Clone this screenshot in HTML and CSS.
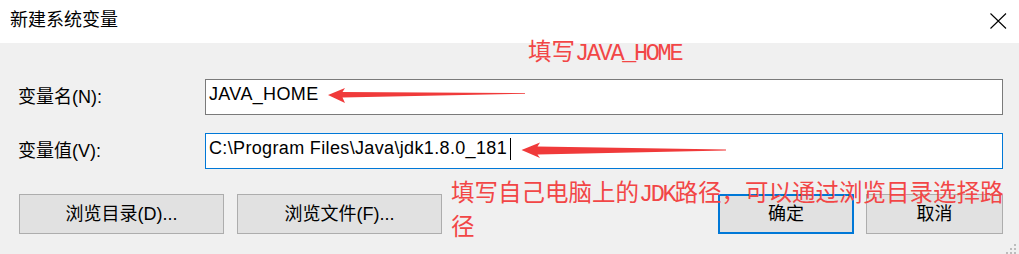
FILE: index.html
```html
<!DOCTYPE html>
<html lang="zh-CN">
<head>
<meta charset="utf-8">
<title>新建系统变量</title>
<link rel="stylesheet" href="styles.css">
</head>
<body>
<div class="window">
  <div class="titlebar">
    <span class="title">新建系统变量</span>
    <span class="close">
      <svg width="17" height="16" viewBox="0 0 17 16"><path d="M0.5 0.5 L16 15.5 M16 0.5 L0.5 15.5" stroke="#000" stroke-width="1.1" fill="none"/></svg>
    </span>
  </div>
  <div class="content">
    <div class="row">
      <span class="label">变量名(N):</span>
      <div class="field">JAVA_HOME</div>
    </div>
    <div class="row row-second">
      <span class="label">变量值(V):</span>
      <div class="field focused">C:\Program Files\Java\jdk1.8.0_181<span class="caret"></span></div>
    </div>
    <div class="buttons">
      <div class="group group-left">
        <button class="btn wide">浏览目录(D)...</button>
        <button class="btn wide">浏览文件(F)...</button>
      </div>
      <div class="group group-right">
        <button class="btn narrow default">确定</button>
        <button class="btn narrow">取消</button>
      </div>
    </div>
  </div>
  <svg class="grip" width="12" height="10" viewBox="0 0 12 10">
    <rect x="8" y="0" width="2" height="2" fill="#bcbcbc"/>
    <rect x="4" y="4" width="2" height="2" fill="#bcbcbc"/>
    <rect x="8" y="4" width="2" height="2" fill="#bcbcbc"/>
    <rect x="0" y="8" width="2" height="2" fill="#bcbcbc"/>
    <rect x="4" y="8" width="2" height="2" fill="#bcbcbc"/>
    <rect x="8" y="8" width="2" height="2" fill="#bcbcbc"/>
  </svg>
  <svg class="arrows" width="1019" height="254" viewBox="0 0 1019 254">
    <polygon points="328,95 345,88 342.5,92 525,93 525,93.8 342.5,97.5 345,103" fill="#f03a3a"/>
    <polygon points="521.5,150 540,142.5 537.5,146.5 726,149.6 726,150.6 537.5,154.5 540,158" fill="#f03a3a"/>
  </svg>
  <div class="note note-name">填写<span class="mono">JAVA_HOME</span></div>
  <div class="note note-value">填写自己电脑上的<span class="mono">JDK</span>路径，可以通过浏览目录选择路<br>径</div>
</div>
</body>
</html>
```

FILE: styles.css
```css
html, body {
  margin: 0;
  padding: 0;
}

body {
  width: 1019px;
  height: 254px;
  overflow: hidden;
  background: #f0f0f0;
  font-family: "Liberation Sans", "Noto Sans CJK SC", sans-serif;
  font-size: 18px;
  color: #000;
}

.window {
  position: relative;
  width: 1019px;
  height: 254px;
}

.titlebar {
  height: 43px;
  background: #fff;
  display: flex;
  align-items: flex-start;
}

.title {
  margin-left: 10px;
  margin-top: 8px;
  line-height: 24px;
}

.close {
  margin-left: auto;
  margin-right: 12px;
  margin-top: 13px;
  display: flex;
}

.content {
  padding: 36px 16px 0 18px;
}

.row {
  display: flex;
  align-items: center;
  height: 36px;
}

.row-second {
  margin-top: 18px;
}

.label {
  width: 187px;
  flex: none;
  line-height: 24px;
}

.field {
  flex: 1;
  height: 36px;
  box-sizing: border-box;
  border: 1px solid #7a7a7a;
  background: #fff;
  padding: 4px 3px 0 3px;
  line-height: 21px;
  letter-spacing: 0.35px;
  white-space: nowrap;
  display: flex;
  align-items: flex-start;
}

.field.focused {
  border-color: #0078d7;
}

.caret {
  display: inline-block;
  width: 1px;
  height: 22px;
  background: #000;
  margin-left: 3px;
}

.buttons {
  display: flex;
  justify-content: space-between;
  margin-top: 25px;
}

.group {
  display: flex;
}

.group-left {
  gap: 13px;
  padding-left: 1px;
}

.group-right {
  gap: 12px;
}

.btn {
  height: 40px;
  box-sizing: border-box;
  background: #e1e1e1;
  border: 1px solid #adadad;
  font-family: "Liberation Sans", "Noto Sans CJK SC", sans-serif;
  font-size: 18px;
  color: #000;
  padding: 0;
  margin: 0;
  line-height: 24px;
}

.btn.wide {
  width: 205px;
}

.btn.narrow {
  width: 136px;
}

.group-right .btn.narrow:last-child {
  width: 137px;
}

.btn.default {
  border: 2px solid #0078d7;
}

.grip {
  position: absolute;
  right: 1px;
  bottom: 0;
}

.arrows {
  position: absolute;
  left: 0;
  top: 0;
  pointer-events: none;
}

.note {
  position: absolute;
  font-family: "Noto Sans CJK SC", sans-serif;
  font-size: 23.5px;
  line-height: 31px;
  color: #f24646;
  white-space: nowrap;
  pointer-events: none;
}

.mono {
  font-family: "Liberation Mono", monospace;
  letter-spacing: -2.3px;
}

.note-name {
  left: 528px;
  top: 35px;
}

.note-value {
  left: 451px;
  top: 176px;
}
```
